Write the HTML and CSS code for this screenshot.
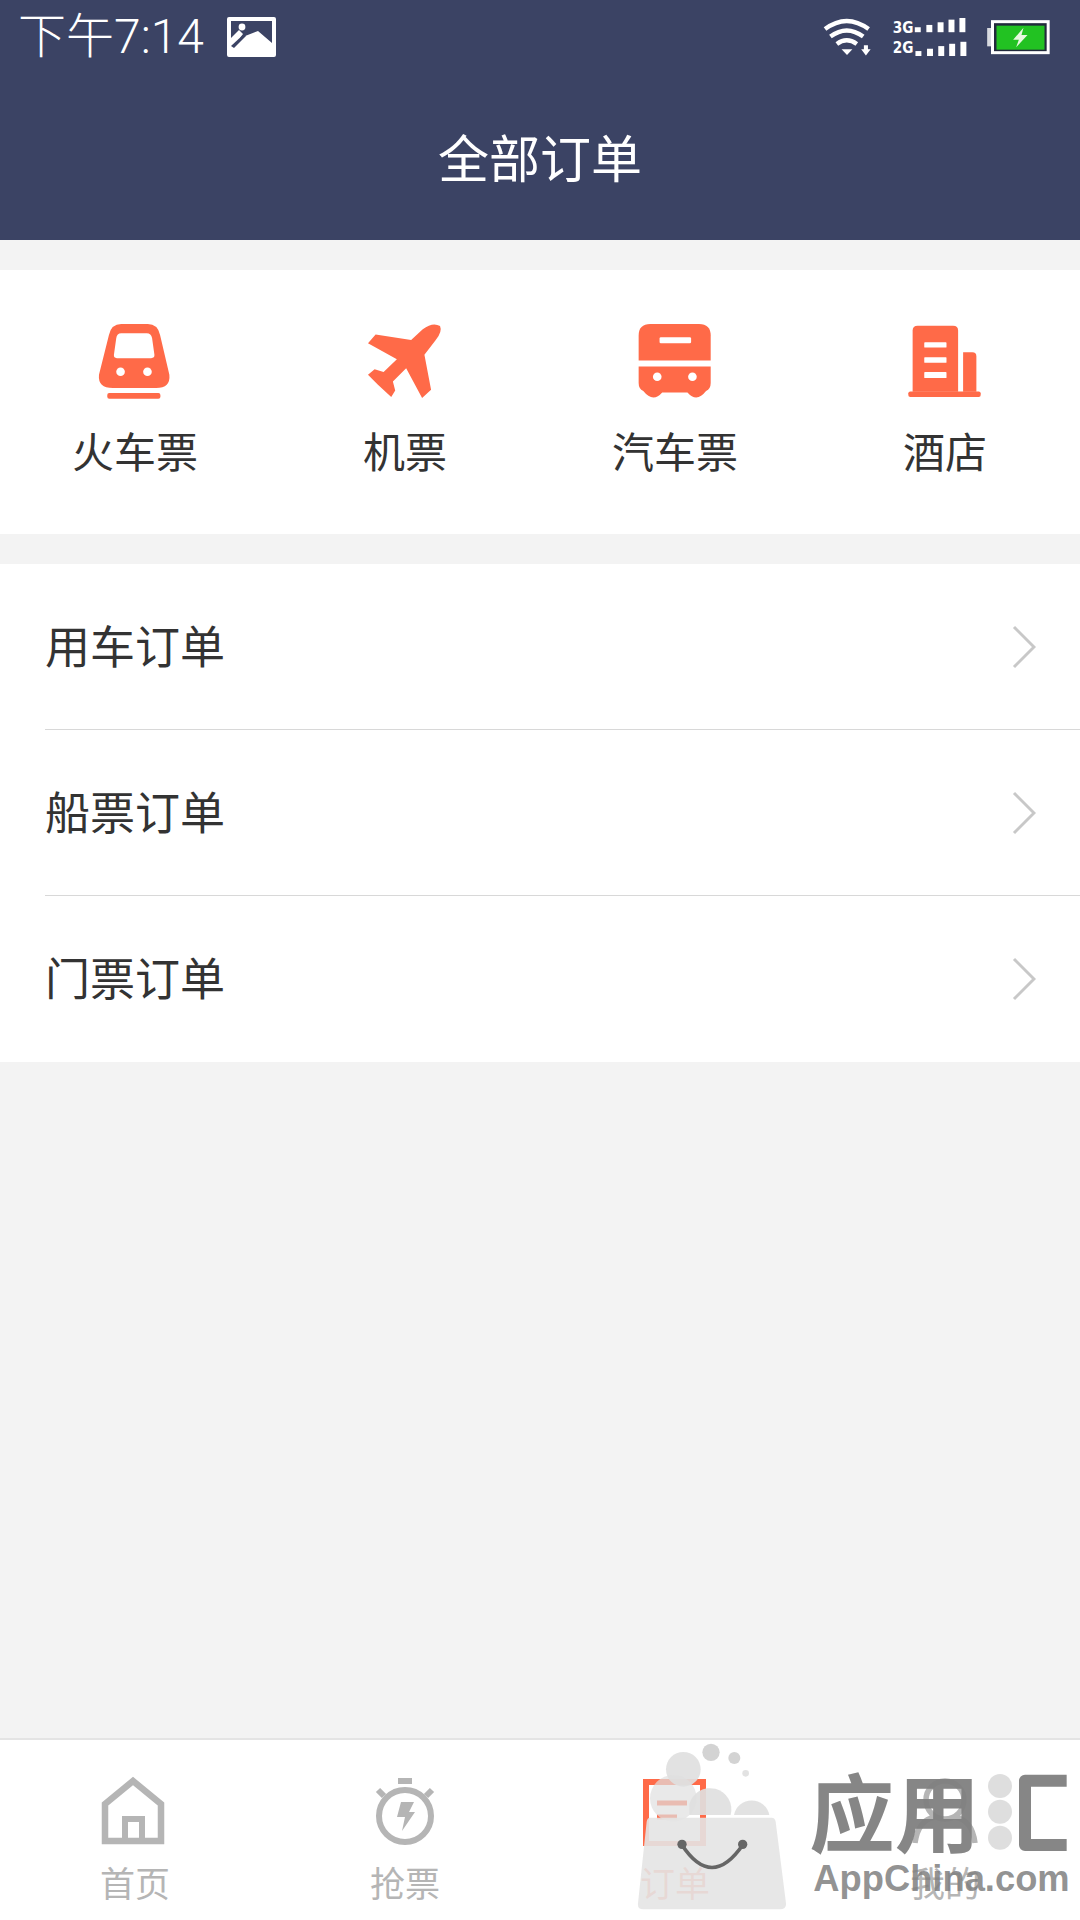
FILE: index.html
```html
<!DOCTYPE html>
<html>
<head>
    <title>全部订单</title>
    <link rel="stylesheet" href="styles.css">
</head>
<body>
    <div class="page">
        <div class="header">
            <div class="status-bar">
                <div class="status-left">
                    <span class="clock">下午7:14</span>
                    <svg class="pic-icon" viewBox="0 0 49 40">
                        <path fill="#fff" fill-rule="evenodd" d="M2 0H47Q49 0 49 2V38Q49 40 47 40H2Q0 40 0 38V2Q0 0 2 0ZM4 4V21L12 13L16 17L13 21L31 14L45 26V4Z"/>
                        <circle cx="15" cy="10" r="3.4" fill="#fff"/>
                        <path fill="#3b4364" d="M4 29L17 17L19 19L7 31Z"/>
                    </svg>
                </div>
                <div class="status-right">
                    <svg class="wifi-icon" viewBox="135 55 145 120">
                        <g fill="none" stroke="#fff" stroke-width="13">
                            <path d="M141 90Q205 42 270 90"/>
                            <path d="M157 112Q205 76 254 112"/>
                            <path d="M176 134Q205 112 235 134"/>
                        </g>
                        <path fill="#fff" d="M190 150H222L206 167Z"/>
                        <path fill="#fff" d="M256 138H268V150H276L262 168L248 150H256Z"/>
                    </svg>
                    <svg class="signal-icon" viewBox="335 52 228 124">
                        <text class="net-label" x="336" y="100">3G</text>
                        <text class="net-label" x="336" y="162">2G</text>
                        <g fill="#fff">
                            <rect x="403" y="83" width="18" height="15"/>
                            <rect x="438" y="76" width="18" height="22"/>
                            <rect x="472" y="68" width="18" height="30"/>
                            <rect x="505" y="60" width="18" height="38"/>
                            <rect x="538" y="55" width="18" height="43"/>
                            <rect x="405" y="155" width="18" height="15"/>
                            <rect x="440" y="148" width="18" height="22"/>
                            <rect x="474" y="140" width="18" height="30"/>
                            <rect x="507" y="133" width="18" height="37"/>
                            <rect x="541" y="127" width="18" height="43"/>
                        </g>
                    </svg>
                    <svg class="battery-icon" viewBox="622 58 194 108">
                        <rect x="625" y="85" width="12" height="55" fill="#d8dae0"/>
                        <rect x="641" y="66" width="167" height="93" fill="#222a3c" stroke="#fff" stroke-width="9"/>
                        <rect x="653" y="78" width="144" height="72" fill="#22c222"/>
                        <path fill="#e8f8e0" d="M734 84L703 120H720L712 143L746 106H728Z"/>
                    </svg>
                </div>
            </div>
            <div class="title">全部订单</div>
        </div>

        <div class="ticket-card">
            <div class="ticket">
                <svg class="ticket-icon" viewBox="103 60 250 250">
                    <path fill="#ff6a48" fill-rule="evenodd" d="M185 72H265Q295 72 302 105L330 225Q334 265 290 265H160Q114 265 118 225L148 105Q155 72 185 72ZM185 100Q172 100 170 115L163 165Q162 175 172 175H275Q286 175 285 165L278 115Q275 100 262 100Z"/>
                    <circle cx="183" cy="216" r="13" fill="#fff"/>
                    <circle cx="264" cy="216" r="13" fill="#fff"/>
                    <rect x="143" y="280" width="160" height="17" rx="6" fill="#ff6a48"/>
                </svg>
                <span>火车票</span>
            </div>
            <div class="ticket">
                <svg class="ticket-icon" viewBox="913 60 250 250">
                    <path fill="#ff6a48" d="M1142 78Q1150 95 1128 122L1095 165L1115 270L1088 295L1040 205L1000 245L1007 272L995 292L955 255L925 225L945 208L972 217L1012 178L925 130L948 104L1055 120L1090 88Q1120 65 1142 78Z"/>
                </svg>
                <span>机票</span>
            </div>
            <div class="ticket">
                <svg class="ticket-icon" viewBox="101 60 250 250">
                    <path fill="#ff6a48" d="M150 72H297Q332 72 332 107V182H115V107Q115 72 150 72Z"/>
                    <path fill="#ff6a48" d="M115 200H332V250Q332 268 318 274Q290 310 262 278H186Q158 310 129 274Q115 268 115 250Z"/>
                    <rect x="178" y="112" width="95" height="18" rx="4" fill="#fff"/>
                    <circle cx="171" cy="231" r="13" fill="#fff"/>
                    <circle cx="277" cy="231" r="13" fill="#fff"/>
                </svg>
                <span>汽车票</span>
            </div>
            <div class="ticket">
                <svg class="ticket-icon" viewBox="912 60 250 250">
                    <path fill="#ff6a48" d="M953 77H1060Q1075 77 1075 92V276H938V92Q938 77 953 77Z"/>
                    <path fill="#ff6a48" d="M1090 157H1118Q1130 157 1130 169V276H1090Z"/>
                    <rect x="925" y="275" width="218" height="17" rx="6" fill="#ff6a48"/>
                    <rect x="973" y="127" width="67" height="16" rx="2" fill="#fff"/>
                    <rect x="973" y="172" width="67" height="17" rx="2" fill="#fff"/>
                    <rect x="973" y="217" width="67" height="18" rx="2" fill="#fff"/>
                </svg>
                <span>酒店</span>
            </div>
        </div>

        <div class="order-list">
            <div class="order-row">
                <span>用车订单</span>
                <svg class="chevron" viewBox="0 0 24 46"><path d="M2 3L22 23L2 43"/></svg>
            </div>
            <div class="order-row">
                <span>船票订单</span>
                <svg class="chevron" viewBox="0 0 24 46"><path d="M2 3L22 23L2 43"/></svg>
            </div>
            <div class="order-row last">
                <span>门票订单</span>
                <svg class="chevron" viewBox="0 0 24 46"><path d="M2 3L22 23L2 43"/></svg>
            </div>
        </div>

        <div class="spacer"></div>

        <div class="tabbar">
            <div class="tab">
                <svg class="tab-icon" viewBox="0 0 70 70">
                    <g fill="none" stroke="#b5b5b5" stroke-width="6.5">
                        <path d="M33 5L5 28V65H61V28Z"/>
                        <path stroke-width="6" d="M25 65V43H42V65"/>
                    </g>
                </svg>
                <span>首页</span>
            </div>
            <div class="tab">
                <svg class="tab-icon" viewBox="0 0 70 70">
                    <circle cx="35" cy="40" r="26" fill="none" stroke="#b5b5b5" stroke-width="6"/>
                    <rect x="28" y="2" width="14" height="6" fill="#b5b5b5"/>
                    <path stroke="#b5b5b5" stroke-width="6" d="M8 14L14 20M62 14L56 20"/>
                    <path fill="#b5b5b5" d="M31 26H44L39 36H45L32 55L35 41H27Z"/>
                </svg>
                <span>抢票</span>
            </div>
            <div class="tab active">
                <svg class="tab-icon" viewBox="0 0 70 70">
                    <rect x="6" y="6" width="57" height="62" fill="none" stroke="#ff6a48" stroke-width="6"/>
                    <path stroke="#ff6a48" stroke-width="5" d="M17 27H47M17 41H37"/>
                </svg>
                <span>订单</span>
            </div>
            <div class="tab">
                <svg class="tab-icon" viewBox="0 0 70 70">
                    <g fill="none" stroke="#b5b5b5" stroke-width="5.5">
                        <circle cx="35" cy="24" r="19"/>
                        <path d="M5 67Q8 44 25 41M65 67Q62 44 45 41"/>
                    </g>
                </svg>
                <span>我的</span>
            </div>
        </div>

        <svg class="watermark" viewBox="0 0 1440 570">
            <g fill="#e0e0e0" fill-opacity="0.92">
                <circle cx="250" cy="118" r="52"/>
                <circle cx="333" cy="67" r="26" fill="#cfcfcf"/>
                <circle cx="403" cy="84" r="18" fill="#cfcfcf"/>
                <circle cx="437" cy="130" r="10"/>
                <path d="M268 222A62 62 0 0 1 392 255H268Z"/>
                <path d="M402 255A54 54 0 0 1 508 255Z"/>
                <circle cx="220" cy="205" r="70" fill-opacity="0.7"/>
            </g>
            <path fill="#e4e4e4" fill-opacity="0.9" d="M150 263H515Q525 263 527 275L558 520Q560 538 540 538H130Q112 538 114 520L140 275Q142 263 150 263Z"/>
            <path fill="none" stroke="#666" stroke-width="11" d="M246 345Q335 480 428 345"/>
            <circle cx="246" cy="343" r="14" fill="#666"/>
            <circle cx="428" cy="343" r="14" fill="#666"/>
            <text class="wm-cn" x="628" y="347">应用</text>
            <g fill="#dcdcdc" fill-opacity="0.95">
                <circle cx="1200" cy="168" r="36"/>
                <circle cx="1200" cy="245" r="36"/>
                <circle cx="1200" cy="323" r="36"/>
            </g>
            <path fill="none" stroke="#808080" stroke-opacity="0.95" stroke-width="36" stroke-linejoin="round" d="M1400 152H1275V345H1400"/>
            <text class="wm-en" x="640" y="484">AppChina.com</text>
        </svg>
    </div>
</body>
</html>
```

FILE: styles.css
```css
* {
    box-sizing: border-box;
}
body {
    margin: 0;
    background-color: #f3f3f3;
    font-family: "Noto Sans CJK SC", "Noto Sans", sans-serif;
    color: #333;
}
.page {
    position: relative;
    display: flex;
    flex-direction: column;
    width: 1080px;
    height: 1920px;
    overflow: hidden;
}
.header {
    height: 240px;
    background-color: #3b4364;
    color: #fff;
}
.status-bar {
    display: flex;
    justify-content: space-between;
    align-items: center;
    height: 74px;
    padding: 0 29px 0 18px;
}
.status-left, .status-right {
    display: flex;
    align-items: center;
}
.clock {
    font-family: Roboto, "Noto Sans CJK SC", sans-serif;
    font-size: 48px;
    font-weight: 300;
    line-height: 72px;
}
.pic-icon {
    width: 49px;
    height: 40px;
    margin-left: 23px;
}
.wifi-icon {
    width: 49px;
    height: 41px;
}
.signal-icon {
    width: 76px;
    height: 41px;
    margin-left: 20px;
}
.net-label {
    font-family: "DejaVu Sans Condensed", "DejaVu Sans", sans-serif;
    font-size: 46px;
    font-weight: 700;
    fill: #fff;
}
.battery-icon {
    width: 65px;
    height: 36px;
    margin-left: 18px;
}
.title {
    display: flex;
    justify-content: center;
    align-items: center;
    height: 166px;
    padding-bottom: 2px;
    font-size: 51px;
}
.ticket-card {
    display: grid;
    grid-template-columns: repeat(4, 1fr);
    height: 264px;
    margin-top: 30px;
    padding-top: 50px;
    background-color: #fff;
}
.ticket {
    display: flex;
    flex-direction: column;
    align-items: center;
    font-size: 42px;
    line-height: 50px;
}
.ticket-icon {
    width: 83px;
    height: 83px;
    margin-bottom: 22px;
}
.order-list {
    margin-top: 30px;
    background-color: #fff;
}
.order-row {
    display: flex;
    justify-content: space-between;
    align-items: center;
    height: 166px;
    margin-left: 45px;
    padding-right: 44px;
    border-bottom: 1px solid #d8d8d8;
    font-size: 45px;
}
.order-row span {
    padding-bottom: 5px;
}
.order-row.last {
    border-bottom: none;
}
.chevron {
    width: 24px;
    height: 46px;
    fill: none;
    stroke: #c8c8c8;
    stroke-width: 3;
}
.spacer {
    flex: 1;
}
.tabbar {
    display: grid;
    grid-template-columns: repeat(4, 1fr);
    height: 182px;
    padding-top: 36px;
    border-top: 2px solid #e4e4e4;
    background-color: #fff;
    color: #b5b5b5;
}
.tab {
    display: flex;
    flex-direction: column;
    align-items: center;
    font-size: 35px;
    line-height: 40px;
}
.tab.active {
    color: #ff6a48;
}
.tab-icon {
    width: 70px;
    height: 70px;
    margin-bottom: 16px;
}
/* watermark stamped over the tab bar */
.watermark {
    position: absolute;
    left: 600px;
    top: 1730px;
    width: 480px;
    height: 190px;
}
.wm-cn {
    font-size: 256px;
    font-weight: 700;
    fill: #808080;
    fill-opacity: 0.95;
}
.wm-en {
    font-family: "Liberation Sans", sans-serif;
    font-size: 109px;
    font-weight: 700;
    fill: #808080;
    fill-opacity: 0.85;
}
```
